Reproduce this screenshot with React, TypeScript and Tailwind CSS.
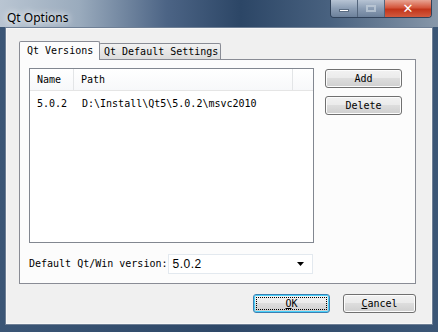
import type { ReactNode } from 'react';

const mono = "font-['DejaVu_Sans_Mono',monospace] text-[10px] leading-[12px] text-black";

function Btn({ label, primary, w = 77 }: { label: ReactNode; primary?: boolean; w?: number }) {
  return (
    <div
      style={{ width: w }}
      className={`h-[19px] rounded-[3px] border bg-[linear-gradient(to_bottom,#f2f2f2_0%,#ebebeb_45%,#dddddd_50%,#cfcfcf_100%)] flex items-center justify-center ${
        primary ? 'border-[#3c7fb1] shadow-[inset_0_0_0_1px_#48d1fb]' : 'border-[#707070] shadow-[inset_0_0_0_1px_#fcfcfc]'
      }`}
    >
      {primary ? (
        <div className="w-[71px] h-[13px] border border-dotted border-black flex items-center justify-center">
          <span className={mono}>{label}</span>
        </div>
      ) : (
        <span className={mono}>{label}</span>
      )}
    </div>
  );
}

export default function App() {
  return (
    <div className="w-[438px] h-[332px] flex flex-col bg-[linear-gradient(to_right,#3b5676_0%,#2e4868_50%,#3b5676_100%)] overflow-hidden">
      {/* Title bar */}
      <div className="h-[27px] flex items-start bg-[linear-gradient(to_right,#b9c5d2_0%,#9aabbd_18%,#4c6485_38%,#2c4666_55%,#48617f_75%,#8797a9_100%)]">
        <div className="pl-[7px] pt-[4px] flex-1">
          <span className="font-['Noto_Sans',sans-serif] text-[12px] text-black [text-shadow:0_0_6px_#ffffff,0_0_10px_#ffffff]">Qt Options</span>
        </div>
        <div className="flex mr-[6px] h-[18px] rounded-b-[4px] border border-t-0 border-[#30425a] overflow-hidden">
          <div className="w-[27px] bg-[linear-gradient(to_bottom,#b7c4d4,#8b9db4_50%,#6d819b)] border-r border-[#53657c] flex items-center justify-center">
            <div className="w-[10px] h-[3px] bg-white border border-[#5a6c82] mt-[4px]" />
          </div>
          <div className="w-[27px] bg-[linear-gradient(to_bottom,#b7c4d4,#8b9db4_50%,#6d819b)] border-r border-[#53657c] flex items-center justify-center">
            <div className="w-[10px] h-[7px] border-2 border-[#c5d0dc] opacity-70" />
          </div>
          <div className="w-[46px] bg-[linear-gradient(to_bottom,#e8a493,#d4563c_45%,#c2351a_55%,#d25a3e)] flex items-center justify-center">
            <span className="font-['DejaVu_Sans',sans-serif] text-[13px] font-bold text-white leading-none">✕</span>
          </div>
        </div>
      </div>

      {/* Client area */}
      <div className="mx-[5px] mb-[7px] flex-1 bg-[#f0f0f0] border border-[#6e7f95] shadow-[inset_0_0_0_1px_#f7f7f7] pl-[13px] pt-[13px] pr-[16px] flex flex-col">
        {/* Tabs */}
        <div className="flex items-end h-[18px] w-[397px]">
          <div className="relative z-10 w-[81px] h-[19px] -mb-px bg-[#fcfcfc] border border-b-0 border-[#898c95] rounded-t-[2px] pl-[7px] flex items-center">
            <span className={mono}>Qt Versions</span>
          </div>
          <div className="w-[122px] h-[16px] -ml-px bg-[linear-gradient(to_bottom,#f2f2f2,#dcdcdc)] border border-b-0 border-[#898c95] rounded-t-[2px] pl-[4px] flex items-center">
            <span className={mono}>Qt Default Settings</span>
          </div>
        </div>
        <div className="w-[397px] h-[225px] bg-[#fcfcfc] border border-[#898c95] pl-[9px] pt-[8px] flex flex-col">
          <div className="flex">
            {/* List */}
            <div className="w-[285px] h-[175px] bg-white border border-[#828790] flex flex-col">
              <div className="h-[22px] flex bg-[linear-gradient(to_bottom,#ffffff,#f7f8fa)] border-b border-[#e5e5e5]">
                <div className="w-[44px] border-r border-[#e3e5e7] pl-[7px] flex items-center">
                  <span className={mono}>Name</span>
                </div>
                <div className="w-[219px] border-r border-[#e3e5e7] pl-[7px] flex items-center">
                  <span className={mono}>Path</span>
                </div>
                <div className="flex-1" />
              </div>
              <div className="h-[19px] flex items-center">
                <div className="w-[44px] pl-[7px]">
                  <span className={mono}>5.0.2</span>
                </div>
                <div className="pl-[8px]">
                  <span className={mono}>D:\Install\Qt5\5.0.2\msvc2010</span>
                </div>
              </div>
            </div>
            {/* Side buttons */}
            <div className="ml-[11px] mt-px flex flex-col gap-[8px]">
              <Btn label="Add" />
              <Btn label="Delete" />
            </div>
          </div>
          <div className="mt-[11px] flex items-center">
            <span className={mono}>Default Qt/Win version:</span>
            <div className="ml-[1px] w-[145px] h-[20px] bg-white border border-[#e3e9ef] flex items-center justify-between pl-[3px] pr-[8px]">
              <span className="font-['Liberation_Sans',sans-serif] text-[12px] tracking-[0.5px] text-black">5.0.2</span>
              <svg width="7" height="4" viewBox="0 0 7 4"><path d="M0 0h7L3.5 4z" fill="#000" /></svg>
            </div>
          </div>
        </div>
        {/* Bottom buttons */}
        <div className="mt-[10px] flex justify-end gap-[13px]">
          <Btn primary label={<span><span className="underline">O</span>K</span>} />
          <Btn w={73} label={<span><span className="underline">C</span>ancel</span>} />
        </div>
      </div>
    </div>
  );
}
